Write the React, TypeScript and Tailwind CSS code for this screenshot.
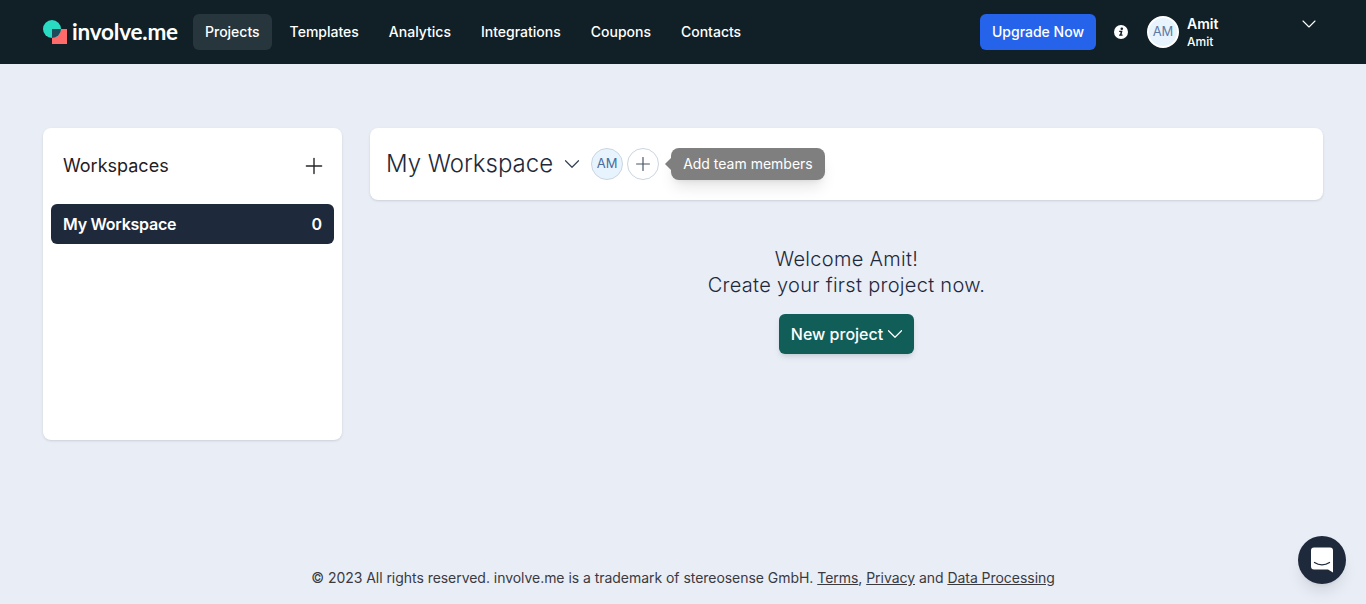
import { ChevronDown, Plus } from "lucide-react";

const navItems = ["Projects", "Templates", "Analytics", "Integrations", "Coupons", "Contacts"];

function Logo() {
  return (
    <div className="flex w-[134px] items-center">
      <svg width="24" height="24" viewBox="0 0 24 24" className="shrink-0">
        <rect x="9" y="9" width="15" height="15" fill="#ff6b6b" />
        <circle cx="9" cy="9" r="9" fill="#2adbc3" />
        <path d="M9 9h9a9 9 0 0 1-9 9z" fill="#1f4a5c" />
      </svg>
      <span className="ml-[5px] font-['Lato',sans-serif] text-[22.5px] leading-none font-bold tracking-[-0.2px] text-white">
        involve.me
      </span>
    </div>
  );
}

function Header() {
  return (
    <header className="flex h-16 shrink-0 items-center bg-[#111f26] pr-[45px] pl-[43px]">
      <Logo />
      <nav className="ml-4 flex items-center gap-[6px]">
        {navItems.map((item, i) => (
          <a
            key={item}
            className={
              i === 0
                ? "flex h-9 items-center rounded-md bg-[#27363d] px-3 text-sm font-medium text-white"
                : "flex h-9 items-center rounded-md px-3 text-sm font-medium text-white"
            }
          >
            {item}
          </a>
        ))}
      </nav>
      <div className="ml-auto flex items-center">
        <button className="flex h-9 items-center rounded-md bg-[#2563eb] px-3 text-sm font-medium text-white">
          Upgrade Now
        </button>
        <svg width="14" height="14" viewBox="0 0 14 14" className="ml-[18px]">
          <circle cx="7" cy="7" r="7" fill="#fff" />
          <path d="M5.2 5.800h3.300l-.9 3.800h1v1.100H5.100V9.600h.9l.6-2.700H5.200z" fill="#111f26" />
          <circle cx="7.800" cy="3.700" r="1.300" fill="#111f26" />
        </svg>
        <div className="ml-[19px] flex h-8 w-8 items-center justify-center rounded-full border-2 border-white bg-[#e8f4fd] text-[13px] text-[#5b7ba6]">
          AM
        </div>
        <div className="ml-2 w-[110px]">
          <p className="text-sm leading-5 font-semibold text-white">Amit</p>
          <p className="text-xs leading-4 font-medium text-white">Amit</p>
        </div>
        <ChevronDown size={24} strokeWidth={1.1} className="-mt-4 text-white" />
      </div>
    </header>
  );
}

function Sidebar() {
  return (
    <aside className="h-[312px] w-[299px] shrink-0 rounded-lg bg-white px-2 shadow-sm">
      <div className="flex h-[76px] items-center justify-between px-3">
        <h2 className="text-lg text-[#1f2024]">Workspaces</h2>
        <Plus size={26} strokeWidth={1.3} className="-mr-[5px] text-[#27272a]" />
      </div>
      <div className="flex h-10 items-center justify-between rounded-md bg-[#1e293b] px-3 text-base font-semibold text-white">
        <span className="tracking-[-0.25px]">My Workspace</span>
        <span>0</span>
      </div>
    </aside>
  );
}

function WorkspaceBar() {
  return (
    <div className="flex h-[72px] items-center rounded-lg bg-white pl-4 shadow-sm">
      <h1 className="text-2xl font-light text-[#1e293b]">My Workspace</h1>
      <ChevronDown size={26} strokeWidth={1.1} className="ml-[6px] text-[#334155]" />
      <div className="ml-[6px] flex h-8 w-8 items-center justify-center rounded-full border border-[#cbd5e1] bg-[#e8f4fd] text-[13px] text-[#4a6b9c]">
        AM
      </div>
      <div className="relative ml-[4px] flex h-8 w-8 items-center justify-center rounded-full border border-[#cbd5e1] bg-white text-[#475569]">
        <Plus size={22} strokeWidth={1.3} />
        <div className="absolute -top-px left-[43px] flex h-8 items-center rounded-lg bg-[#7f7f7f] px-3 text-sm whitespace-nowrap text-white shadow-lg">
          <span className="absolute top-[10px] -left-[6px] h-0 w-0 border-y-[6px] border-r-[6px] border-y-transparent border-r-[#7f7f7f]" />
          Add team members
        </div>
      </div>
    </div>
  );
}

export default function App() {
  return (
    <div className="flex min-h-screen flex-col bg-[#e9edf6] font-['Inter',sans-serif]">
      <Header />
      <main className="flex gap-7 pt-16 pr-[43px] pl-[43px]">
        <Sidebar />
        <section className="flex-1">
          <WorkspaceBar />
          <div className="mt-[46px] flex flex-col items-center">
            <p className="text-center text-xl leading-[26px] font-light tracking-[0.3px] text-[#1e293b]">
              Welcome Amit!
              <br />
              Create your first project now.
            </p>
            <button className="mt-4 flex h-10 items-center rounded-md bg-[#115e59] px-3 text-base font-medium text-white shadow-md">
              New project
              <ChevronDown size={26} strokeWidth={1.1} className="-mr-[6px] -ml-[1px]" />
            </button>
          </div>
        </section>
      </main>
      <footer className="mt-auto pb-[16px] text-center text-sm leading-5 tracking-[-0.04px] text-[#3a3a3f]">
        © 2023 All rights reserved. involve.me is a trademark of stereosense GmbH.{" "}
        <a className="underline">Terms</a>, <a className="underline">Privacy</a> and{" "}
        <a className="underline">Data Processing</a>
      </footer>
      <button className="fixed right-5 bottom-5 flex h-12 w-12 items-center justify-center rounded-full bg-[#1e293b] shadow-lg">
        <svg width="24" height="26" viewBox="0 0 24 26">
          <path
            d="M1 3.500A3 3 0 0 1 4 .5h16a3 3 0 0 1 3 3V25.500l-5-3H4a3 3 0 0 1-3-3z"
            fill="#fff"
          />
          <path d="M4.500 15.500c4.500 3 10.500 3 15 0" fill="none" stroke="#1e293b" strokeWidth="1.300" strokeLinecap="round" />
        </svg>
      </button>
    </div>
  );
}
